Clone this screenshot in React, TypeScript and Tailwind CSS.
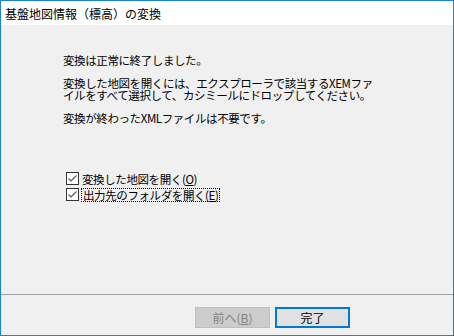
import React from 'react';

const font = { fontFamily: '"Noto Sans CJK JP", "Noto Sans", sans-serif' };

const CheckBox = () => (
  <span className="w-[13px] h-[13px] border border-[#333333] bg-white flex items-center justify-center shrink-0">
    <svg width="11" height="11" viewBox="0 0 11 11">
      <polyline points="1.5,5.5 4,8 9.5,2.5" fill="none" stroke="#555555" strokeWidth="1.1" />
    </svg>
  </span>
);

const App = () => {
  return (
    <div
      className="w-[454px] h-[336px] border border-[#1883d7] flex flex-col text-[12px] leading-[12px] text-black"
      style={font}
    >
      <div className="h-[24px] bg-white flex items-center pl-[4px] pt-[2px]">
        基盤地図情報（標高）の変換
      </div>

      <div className="flex-1 bg-[#f0f0f0] pl-[62px] pt-[29px] text-[11.5px] tracking-[-0.4px]">
        <p>変換は正常に終了しました。</p>
        <p className="mt-[11px]">
          変換した地図を開くには、エクスプローラで該当するXEMファ
          <br />
          イルをすべて選択して、カシミールにドロップしてください。
        </p>
        <p className="mt-[11px]">変換が終わったXMLファイルは不要です。</p>

        <div className="mt-[48px] ml-[3px] flex flex-col gap-[3px]">
          <label className="flex items-center gap-[2px] h-[13px]">
            <CheckBox />
            <span className="px-[1px]">
              変換した地図を開く(<span className="underline">O</span>)
            </span>
          </label>
          <label className="flex items-center gap-[2px] h-[13px]">
            <CheckBox />
            <span className="px-[1px] border border-dotted border-black leading-[12px]">
              出力先のフォルダを開く(<span className="underline">E</span>)
            </span>
          </label>
        </div>
      </div>

      <div className="h-px bg-[#a0a0a0]" />

      <div className="h-[40px] bg-[#f0f0f0] flex items-start pl-[194px] pt-[12px] gap-[5px]">
        <button className="w-[75px] h-[21px] bg-[#cccccc] border border-[#bfbfbf] text-[#838383] flex items-center justify-center">
          前へ(<span className="underline">B</span>)
        </button>
        <button className="w-[75px] h-[21px] bg-[#e1e1e1] border-2 border-[#0078d7] flex items-center justify-center">
          完了
        </button>
      </div>
    </div>
  );
};

export default App;
